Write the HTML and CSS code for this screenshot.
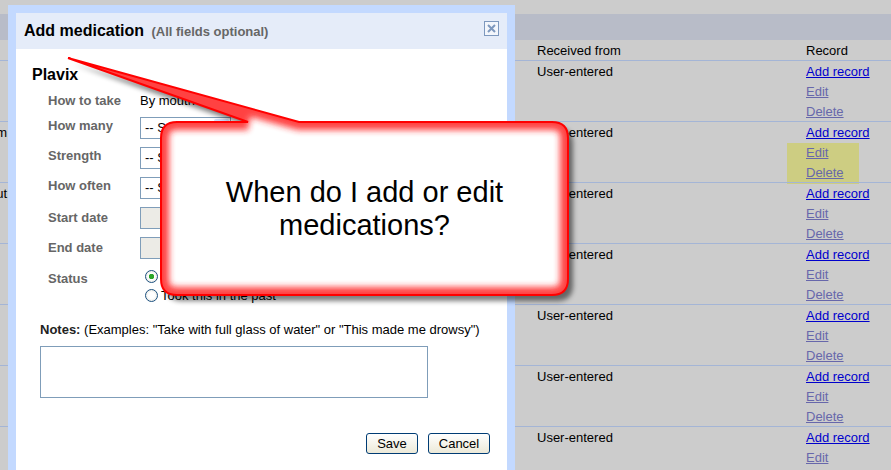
FILE: index.html
```html
<!DOCTYPE html>
<html lang="en">
<head>
    <meta charset="UTF-8">
    <meta name="viewport" content="width=device-width, initial-scale=1.0">
    <title>Add medication</title>
    <link rel="stylesheet" href="styles.css">
</head>
<body>
    <div class="page">
        <div class="band"></div>
        <div class="mark"></div>
        <div class="records">
            <div class="rec-row rec-head">
                <div class="cut"></div>
                <div></div>
                <div>Received from</div>
                <div>Record</div>
            </div>
            <div class="rec-row">
                <div class="cut"></div>
                <div></div>
                <div>User-entered</div>
                <div class="links"><a href="#" class="add">Add record</a><a href="#">Edit</a><a href="#">Delete</a></div>
            </div>
            <div class="rec-row">
                <div class="cut">m</div>
                <div></div>
                <div>User-entered</div>
                <div class="links"><a href="#" class="add">Add record</a><a href="#">Edit</a><a href="#">Delete</a></div>
            </div>
            <div class="rec-row">
                <div class="cut">ut</div>
                <div></div>
                <div>User-entered</div>
                <div class="links"><a href="#" class="add">Add record</a><a href="#">Edit</a><a href="#">Delete</a></div>
            </div>
            <div class="rec-row">
                <div class="cut"></div>
                <div></div>
                <div>User-entered</div>
                <div class="links"><a href="#" class="add">Add record</a><a href="#">Edit</a><a href="#">Delete</a></div>
            </div>
            <div class="rec-row">
                <div class="cut"></div>
                <div></div>
                <div>User-entered</div>
                <div class="links"><a href="#" class="add">Add record</a><a href="#">Edit</a><a href="#">Delete</a></div>
            </div>
            <div class="rec-row">
                <div class="cut"></div>
                <div></div>
                <div>User-entered</div>
                <div class="links"><a href="#" class="add">Add record</a><a href="#">Edit</a><a href="#">Delete</a></div>
            </div>
            <div class="rec-row">
                <div class="cut"></div>
                <div></div>
                <div>User-entered</div>
                <div class="links"><a href="#" class="add">Add record</a><a href="#">Edit</a><a href="#">Delete</a></div>
            </div>
        </div>
    </div>

    <div class="dialog">
        <div class="dialog-head">
            <h2 class="dialog-title">Add medication <span class="hint">(All fields optional)</span></h2>
            <svg class="close" width="15" height="15" viewBox="0 0 15 15">
                <rect x="0.5" y="0.5" width="14" height="14" fill="#f3f6fc" stroke="#7d98be"/>
                <path d="M4 4 L11 11 M11 4 L4 11" stroke="#7d98be" stroke-width="2"/>
            </svg>
        </div>
        <div class="drug">Plavix</div>
        <div class="fields">
            <div class="label first">How to take</div>
            <div class="value first">By mouth</div>

            <div class="label">How many</div>
            <div class="select"><span class="select-text">-- Select --</span><span class="arrow"></span></div>

            <div class="label">Strength</div>
            <div class="select"><span class="select-text">-- Select --</span><span class="arrow"></span></div>

            <div class="label">How often</div>
            <div class="select"><span class="select-text">-- Select --</span><span class="arrow"></span></div>

            <div class="label tall">Start date</div>
            <div class="date"></div>

            <div class="label tall">End date</div>
            <div class="date"></div>

            <div class="label status">Status</div>
            <div class="radios status">
                <div class="radio-opt"><span class="radio checked"></span>Currently taking this</div>
                <div class="radio-opt"><span class="radio"></span>Took this in the past</div>
            </div>
        </div>
        <p class="notes"><b>Notes:</b> (Examples: "Take with full glass of water" or "This made me drowsy")</p>
        <textarea class="notes-box"></textarea>
        <div class="actions">
            <button class="btn save">Save</button>
            <button class="btn cancel">Cancel</button>
        </div>
    </div>

    <div class="callout">
        <svg class="callout-shape" width="891" height="470" viewBox="0 0 891 470">
            <defs>
                <path id="bubble" d="M177 122 L248 122 L68 58 L299 122 L552 122 Q568 122 568 138 L568 279 Q568 295 552 295 L177 295 Q161 295 161 279 L161 138 Q161 122 177 122 Z"/>
                <clipPath id="bubble-clip"><use href="#bubble"/></clipPath>
                <filter id="glow" x="-10%" y="-10%" width="120%" height="120%"><feGaussianBlur stdDeviation="3"/></filter>
                <filter id="soft" x="-10%" y="-10%" width="120%" height="120%"><feGaussianBlur stdDeviation="2.5"/></filter>
            </defs>
            <use href="#bubble" transform="translate(5 6)" fill="#000" opacity="0.5" filter="url(#soft)"/>
            <use href="#bubble" fill="#fff"/>
            <g clip-path="url(#bubble-clip)">
                <use href="#bubble" fill="none" stroke="#ff2020" stroke-width="16" opacity="0.85" filter="url(#glow)"/>
            </g>
            <use href="#bubble" fill="none" stroke="#f00" stroke-width="2"/>
        </svg>
        <p class="callout-text">When do I add or edit<br>medications?</p>
    </div>
</body>
</html>
```

FILE: styles.css
```css
body {
    margin: 0;
    background-color: #cccccc;
    font-family: "Liberation Sans", Arial, sans-serif;
    font-size: 13px;
    color: #000;
    overflow: hidden;
}
.page {
    position: relative;
    padding-top: 14px;
}
.band {
    height: 26px;
    background: #b8bcc8;
}
.mark {
    position: absolute;
    left: 787px;
    top: 143px;
    width: 72px;
    height: 41px;
    background: #cdcd82;
}
.records {
    position: relative;
}
.rec-row {
    display: grid;
    grid-template-columns: 8px 529px 269px 1fr;
    height: 59px;
    padding-top: 1px;
    line-height: 20px;
    border-bottom: 1px solid #a4b5d6;
}
.rec-head {
    height: 19px;
}
.cut {
    direction: rtl;
    overflow: hidden;
    white-space: nowrap;
    padding-right: 1px;
}
.links a {
    display: block;
    width: max-content;
    color: #6767ab;
}
.links a.add {
    color: #0000cc;
}

/* dialog */
.dialog {
    position: absolute;
    left: 8px;
    top: 5px;
    width: 507px;
    height: 480px;
    box-sizing: border-box;
    border: 8px solid #c3d9ff;
    background: #fff;
}
.dialog-head {
    height: 36px;
    background: #e5ecf9;
    display: flex;
    align-items: center;
    padding: 0 8px;
}
.dialog-title {
    margin: 0;
    font-size: 16px;
    font-weight: bold;
}
.hint {
    margin-left: 3px;
    font-size: 13px;
    color: #666;
}
.close {
    margin-left: auto;
    align-self: flex-start;
    margin-top: 8px;
}
.drug {
    margin: 16px 0 0 16px;
    font-size: 16px;
    font-weight: bold;
    line-height: 20px;
}
.fields {
    display: grid;
    grid-template-columns: 92px auto;
    row-gap: 8px;
    align-items: start;
    margin: 8px 0 0 32px;
}
.label {
    font-weight: bold;
    color: #666;
    line-height: 16px;
    padding-top: 1px;
}
.label.first, .value.first {
    line-height: 16px;
    padding-top: 0;
}
.label.tall {
    padding-top: 3px;
}
.status {
    margin-top: 3px;
}
.select {
    display: flex;
    width: 91px;
    height: 22px;
    box-sizing: border-box;
    border: 1px solid #7f9db9;
    background: #fff;
    padding: 1px;
}
.select-text {
    flex: 1;
    line-height: 18px;
    padding-left: 3px;
    overflow: hidden;
    white-space: nowrap;
}
.arrow {
    width: 15px;
    border-radius: 2px;
    background: linear-gradient(#d2e0fd, #b4c9f6);
}
.date {
    width: 100px;
    height: 22px;
    box-sizing: border-box;
    border: 1px solid #7f9db9;
    background: #ecebe6;
}
.radio-opt {
    display: flex;
    align-items: flex-start;
    gap: 3px;
    height: 19px;
    line-height: 14px;
    margin-left: 5px;
}
.radio {
    width: 13px;
    height: 13px;
    box-sizing: border-box;
    border: 1px solid #1c5180;
    border-radius: 50%;
    background: radial-gradient(circle, #ffffff 40%, #dcdcd4);
}
.radio.checked {
    background: radial-gradient(circle, #2aa52a 0 2.5px, #ffffff 3px 40%, #dcdcd4);
}
.notes {
    margin: 14px 0 0 24px;
    line-height: 16px;
}
.notes b {
    color: #222;
}
.notes-box {
    display: block;
    margin: 8px 0 0 24px;
    width: 388px;
    height: 52px;
    box-sizing: border-box;
    border: 1px solid #7f9db9;
    padding: 0;
    resize: none;
}
.actions {
    display: flex;
    justify-content: flex-end;
    gap: 10px;
    margin-top: 35px;
    padding-right: 17px;
}
.btn {
    height: 21px;
    padding: 0;
    font-family: "Liberation Sans", Arial, sans-serif;
    font-size: 13px;
    color: #000;
    border: 1px solid #003c74;
    border-radius: 3px;
    background: linear-gradient(#ffffff, #ece9d8);
}
.save {
    width: 52px;
}
.cancel {
    width: 62px;
}

/* annotation bubble */
.callout {
    position: absolute;
    left: 0;
    top: 0;
    width: 891px;
    height: 470px;
    pointer-events: none;
}
.callout-shape {
    display: block;
}
.callout-text {
    position: absolute;
    left: 161px;
    top: 122px;
    width: 407px;
    height: 173px;
    margin: 0;
    display: flex;
    align-items: center;
    justify-content: center;
    text-align: center;
    font-size: 29px;
    line-height: 33px;
}
```
